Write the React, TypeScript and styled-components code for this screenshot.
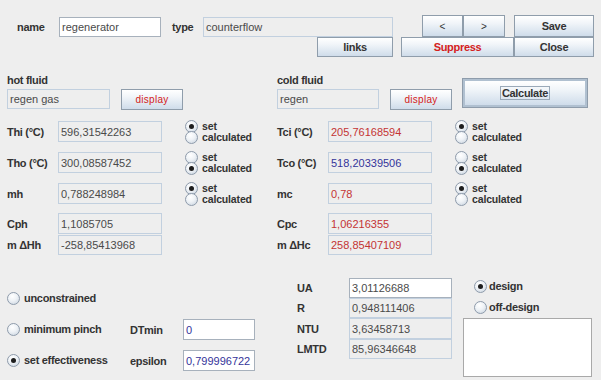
import React from "react";
import styled, { createGlobalStyle, css } from "styled-components";

const GlobalStyle = createGlobalStyle`
    html,
    body {
        margin: 0;
        padding: 0;
        background: #eeeeee;
    }
`;

const Frame = styled.div`
    width: 601px;
    height: 380px;
    overflow: hidden;
    display: flex;
    flex-direction: column;
    background: #eeeeee;
    color: #333333;
    font-family: "Liberation Sans", Arial, sans-serif;
`;

const Label = styled.span<{ $w?: number; $ml?: number }>`
    flex-shrink: 0;
    width: ${(p) => (p.$w ? `${p.$w}px` : "auto")};
    margin-left: ${(p) => p.$ml || 0}px;
    font-size: 11px;
    font-weight: bold;
    letter-spacing: -0.3px;
    white-space: nowrap;
    color: #333333;
`;

type Tone = "plain" | "red" | "blue";

const toneColor: Record<Tone, string> = {
    plain: "#4a4a4a",
    red: "#c43434",
    blue: "#34349a",
};

const Field = styled.div<{ $w: number; $h?: number; $editable?: boolean; $tone?: Tone }>`
    box-sizing: border-box;
    flex-shrink: 0;
    display: flex;
    align-items: center;
    width: ${(p) => p.$w}px;
    height: ${(p) => p.$h || 21}px;
    padding: 0 2px;
    border: 1px solid ${(p) => (p.$editable ? "#a7b1bc" : "#c2d0df")};
    background: ${(p) => (p.$editable ? "#ffffff" : "#eeeeee")};
    color: ${(p) => toneColor[p.$tone || "plain"]};
    font-size: 11px;
    white-space: nowrap;
    overflow: hidden;
`;

const Button = styled.button<{ $w: number; $h: number; $red?: boolean; $small?: boolean; $col?: string }>`
    box-sizing: border-box;
    flex-shrink: 0;
    width: ${(p) => p.$w}px;
    height: ${(p) => p.$h}px;
    margin: 0;
    padding: 0;
    grid-column: ${(p) => p.$col || "auto"};
    border: 1px solid #8f9dab;
    background: linear-gradient(to bottom, #ffffff 0%, #f1f5f9 35%, #dce6f0 75%, #cfdcea 100%);
    font-family: inherit;
    font-size: ${(p) => (p.$small ? 10 : 11)}px;
    font-weight: ${(p) => (p.$small ? "normal" : "bold")};
    letter-spacing: ${(p) => (p.$small ? "0.3px" : "-0.3px")};
    color: ${(p) => (p.$red ? "#d42020" : "#333333")};
    cursor: pointer;
`;

const DefaultButton = styled(Button)`
    border: 2px solid #b0c0d0;
    box-shadow: 0 0 0 1px #8e9cab;
    margin-left: 11px;
    margin-top: 6px;

    span {
        padding: 0 1px;
        border: 1px solid #9aa9b8;
    }
`;

const Header = styled.div`
    display: flex;
    align-items: flex-start;
    padding-top: 16px;
`;

const HeadLeft = styled.div`
    width: 393px;
    display: flex;
    flex-direction: column;
`;

const NameRow = styled.div`
    display: flex;
    align-items: center;
    height: 21px;
    padding-left: 17px;
`;

const LinksRow = styled.div`
    display: flex;
    justify-content: flex-end;
`;

const HeadButtons = styled.div`
    margin-left: 8px;
    margin-top: -1px;
    display: grid;
    grid-template-columns: 21px 41px 42px 9px 80px;
    grid-template-rows: 22px 20px;
`;

const FluidSection = styled.div`
    display: flex;
    align-items: flex-start;
    margin-top: 16px;
`;

const FluidBlock = styled.div<{ $w?: number }>`
    box-sizing: border-box;
    width: ${(p) => (p.$w ? `${p.$w}px` : "auto")};
    padding-left: 7px;
    display: flex;
    flex-direction: column;
`;

const Heading = styled.div`
    height: 14px;
    line-height: 14px;
    font-size: 11px;
    font-weight: bold;
    letter-spacing: -0.3px;
`;

const FluidRow = styled.div`
    display: flex;
    align-items: flex-start;
    gap: 11px;
    margin-top: 2px;
`;

const PropsSection = styled.div`
    display: flex;
    margin-top: 10px;
`;

const PropsColumn = styled.div`
    box-sizing: border-box;
    width: 270px;
    padding-left: 7px;
    display: flex;
    flex-direction: column;
`;

const PropRow = styled.div<{ $gap?: number }>`
    display: grid;
    grid-template-columns: 51px 104px auto;
    align-items: center;
    height: 21px;
    margin-bottom: ${(p) => p.$gap || 0}px;
`;

const RadioPair = styled.div`
    display: flex;
    flex-direction: column;
    margin-left: 23px;
    margin-top: 1px;
`;

const Circle = styled.span<{ $on?: boolean }>`
    box-sizing: border-box;
    position: relative;
    flex-shrink: 0;
    width: 13px;
    height: 13px;
    border-radius: 50%;
    border: 1px solid #8e9bab;
    background: radial-gradient(circle at 40% 30%, #ffffff 0%, #eef2f6 45%, #c6d1dd 100%);

    ${(p) =>
        p.$on &&
        css`
            &::after {
                content: "";
                position: absolute;
                left: 3px;
                top: 3px;
                width: 5px;
                height: 5px;
                border-radius: 50%;
                background: #1e1e1e;
            }
        `}
`;

const Option = styled.label<{ $h: number; $gap?: number; $pl?: number; $tight?: boolean }>`
    display: flex;
    align-items: center;
    gap: ${(p) => (p.$gap === undefined ? 4 : p.$gap)}px;
    height: ${(p) => p.$h}px;
    padding-left: ${(p) => p.$pl || 0}px;
    font-size: ${(p) => (p.$tight ? 10.5 : 11)}px;
    font-weight: bold;
    letter-spacing: ${(p) => (p.$tight ? "-0.15px" : "-0.3px")};
    line-height: ${(p) => p.$h}px;
    white-space: nowrap;
`;

const BottomSection = styled.div`
    display: flex;
    align-items: flex-start;
    margin-top: 21px;
`;

const ModeColumn = styled.div`
    box-sizing: border-box;
    width: 297px;
    padding: 12px 0 0 7px;
    display: flex;
    flex-direction: column;
    gap: 10px;
`;

const ModeRow = styled.div`
    display: grid;
    grid-template-columns: 123px 53px 72px;
    align-items: center;
    height: 21px;
`;

const ResultColumn = styled.div`
    width: 155px;
    padding-top: 2px;
    display: flex;
    flex-direction: column;
`;

const ResultRow = styled.div<{ $h: number }>`
    display: grid;
    grid-template-columns: 52px 103px;
    align-items: center;
    height: ${(p) => p.$h}px;
`;

const DesignColumn = styled.div`
    margin-left: 11px;
    display: flex;
    flex-direction: column;
`;

const Notes = styled.textarea`
    box-sizing: border-box;
    width: 129px;
    height: 59px;
    margin: 0;
    border: 1px solid #a9a9a9;
    background: #ffffff;
    resize: none;
    outline: none;
`;

type Prop = {
    label: string;
    value: string;
    tone?: Tone;
    mode?: "set" | "calculated";
    gap?: number;
};

const hotProps: Prop[] = [
    { label: "Thi (°C)", value: "596,31542263", mode: "set", gap: 10 },
    { label: "Tho (°C)", value: "300,08587452", mode: "calculated", gap: 10 },
    { label: "mh", value: "0,788248984", mode: "set", gap: 10 },
    { label: "Cph", value: "1,1085705" },
    { label: "m ΔHh", value: "-258,85413968" },
];

const coldProps: Prop[] = [
    { label: "Tci (°C)", value: "205,76168594", tone: "red", mode: "set", gap: 10 },
    { label: "Tco (°C)", value: "518,20339506", tone: "blue", mode: "calculated", gap: 10 },
    { label: "mc", value: "0,78", tone: "red", mode: "set", gap: 10 },
    { label: "Cpc", value: "1,06216355", tone: "red" },
    { label: "m ΔHc", value: "258,85407109", tone: "red" },
];

const results = [
    { label: "UA", value: "3,01126688", editable: true, h: 20 },
    { label: "R", value: "0,948111406", h: 20 },
    { label: "NTU", value: "3,63458713", h: 21 },
    { label: "LMTD", value: "85,96346648", h: 20 },
];

const PropsList = ({ items }: { items: Prop[] }) => (
    <PropsColumn>
        {items.map((item) => (
            <PropRow key={item.label} $gap={item.gap}>
                <Label>{item.label}</Label>
                <Field $w={104} $h={item.label.startsWith("m") && !item.mode ? 20 : 21} $tone={item.tone}>
                    {item.value}
                </Field>
                {item.mode && (
                    <RadioPair>
                        <Option $h={11} $tight>
                            <Circle $on={item.mode === "set"} />
                            set
                        </Option>
                        <Option $h={11} $tight>
                            <Circle $on={item.mode === "calculated"} />
                            calculated
                        </Option>
                    </RadioPair>
                )}
            </PropRow>
        ))}
    </PropsColumn>
);

const App = () => {
    return (
        <Frame>
            <GlobalStyle />
            <Header>
                <HeadLeft>
                    <NameRow>
                        <Label $w={42}>name</Label>
                        <Field $w={102} $h={20} $editable>
                            regenerator
                        </Field>
                        <Label $w={31} $ml={11}>
                            type
                        </Label>
                        <Field $w={190} $h={20}>
                            counterflow
                        </Field>
                    </NameRow>
                    <LinksRow>
                        <Button $w={76} $h={20}>
                            links
                        </Button>
                    </LinksRow>
                </HeadLeft>
                <HeadButtons>
                    <Button $w={41} $h={22} $col="2" $small>
                        &lt;
                    </Button>
                    <Button $w={42} $h={22} $col="3" $small>
                        &gt;
                    </Button>
                    <Button $w={80} $h={22} $col="5">
                        Save
                    </Button>
                    <Button $w={113} $h={20} $col="1 / 5" $red>
                        Suppress
                    </Button>
                    <Button $w={80} $h={20} $col="5">
                        Close
                    </Button>
                </HeadButtons>
            </Header>

            <FluidSection>
                <FluidBlock $w={270}>
                    <Heading>hot fluid</Heading>
                    <FluidRow>
                        <Field $w={103} $h={20}>
                            regen gas
                        </Field>
                        <Button $w={62} $h={21} $red $small>
                            display
                        </Button>
                    </FluidRow>
                </FluidBlock>
                <FluidBlock>
                    <Heading>cold fluid</Heading>
                    <FluidRow>
                        <Field $w={102} $h={20}>
                            regen
                        </Field>
                        <Button $w={62} $h={21} $red $small>
                            display
                        </Button>
                    </FluidRow>
                </FluidBlock>
                <DefaultButton $w={124} $h={28}>
                    <span>Calculate</span>
                </DefaultButton>
            </FluidSection>

            <PropsSection>
                <PropsList items={hotProps} />
                <PropsList items={coldProps} />
            </PropsSection>

            <BottomSection>
                <ModeColumn>
                    <ModeRow>
                        <Option $h={21}>
                            <Circle />
                            unconstrained
                        </Option>
                    </ModeRow>
                    <ModeRow>
                        <Option $h={21}>
                            <Circle />
                            minimum pinch
                        </Option>
                        <Label>DTmin</Label>
                        <Field $w={72} $editable $tone="blue">
                            0
                        </Field>
                    </ModeRow>
                    <ModeRow>
                        <Option $h={21}>
                            <Circle $on />
                            set effectiveness
                        </Option>
                        <Label>epsilon</Label>
                        <Field $w={72} $editable $tone="blue">
                            0,799996722
                        </Field>
                    </ModeRow>
                </ModeColumn>
                <ResultColumn>
                    {results.map((r) => (
                        <ResultRow key={r.label} $h={r.h}>
                            <Label>{r.label}</Label>
                            <Field $w={103} $h={r.h} $editable={r.editable}>
                                {r.value}
                            </Field>
                        </ResultRow>
                    ))}
                </ResultColumn>
                <DesignColumn>
                    <Option $h={21} $pl={11} $gap={2}>
                        <Circle $on />
                        design
                    </Option>
                    <Option $h={21} $pl={11} $gap={2}>
                        <Circle />
                        off-design
                    </Option>
                    <Notes readOnly />
                </DesignColumn>
            </BottomSection>
        </Frame>
    );
};

export default App;
